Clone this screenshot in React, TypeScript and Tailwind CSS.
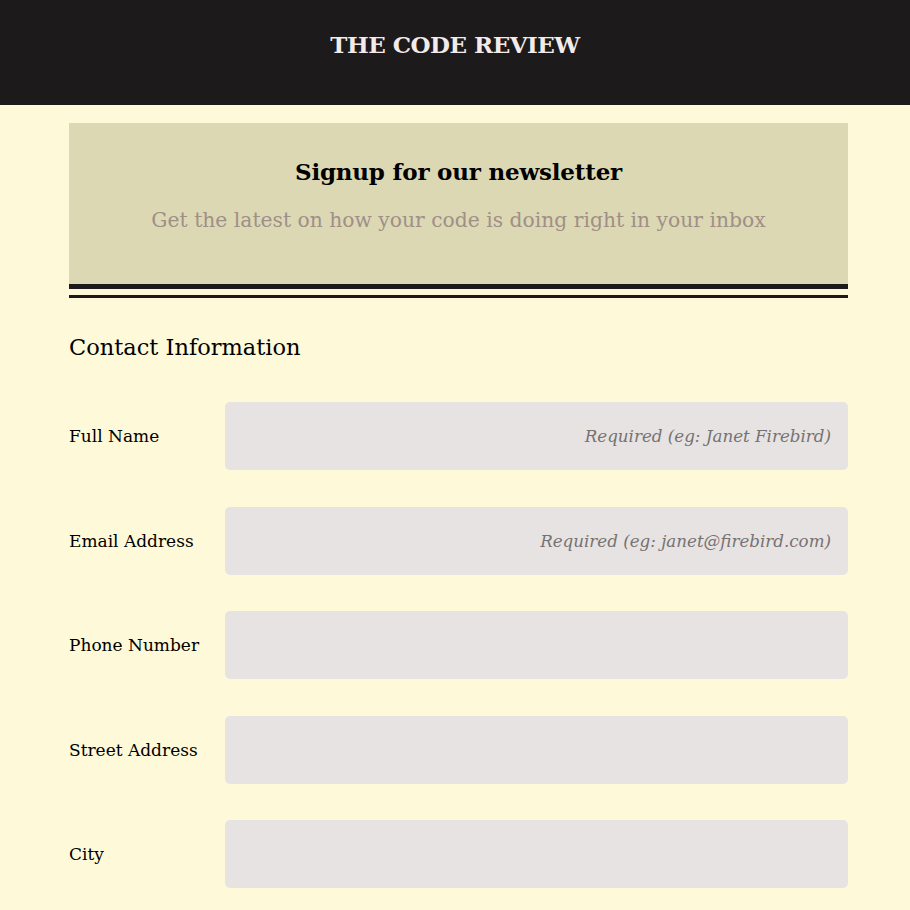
import React from "react"

const fields = [
  { label: "Full Name", placeholder: "Required (eg: Janet Firebird)" },
  { label: "Email Address", placeholder: "Required (eg: janet@firebird.com)" },
  { label: "Phone Number", placeholder: "" },
  { label: "Street Address", placeholder: "" },
  { label: "City", placeholder: "" },
]

const App = () => {
  return (
    <div className="min-h-screen bg-[#fef9d9] font-['DejaVu_Serif',serif] text-[#111]">
      <header className="h-[105px] bg-[#1c1a1b] flex justify-center pt-[28px]">
        <h1 className="text-[23px] leading-[34px] font-bold text-[#f3eaea] tracking-[-0.5px]">
          THE CODE REVIEW
        </h1>
      </header>

      <main className="ml-[69px] w-[779px] pt-[18px] pb-10">
        <section className="bg-[#dcd8b4] border-b-[5px] border-[#1c1a1b] pt-[33px] pb-[50px] text-center">
          <h2 className="text-[23px] font-bold text-black leading-[32px] tracking-[-0.2px]">
            Signup for our newsletter
          </h2>
          <p className="mt-[18px] text-[20.3px] text-[#a08f88] leading-[28px]">
            Get the latest on how your code is doing right in your inbox
          </p>
        </section>
        <div className="mt-[6px] h-[3px] bg-[#1c1a1b]" />

        <h3 className="mt-[33px] text-[22.5px] leading-[32px] text-black">
          Contact Information
        </h3>

        <form className="mt-[39px] flex flex-col gap-[36.5px]">
          {fields.map((f) => (
            <div key={f.label} className="flex items-center">
              <label className="w-[156px] shrink-0 pt-[2px] text-[17px] text-black">
                {f.label}
              </label>
              <input
                type="text"
                placeholder={f.placeholder}
                className="flex-1 h-[68px] rounded-[5px] bg-[#e7e3e2] pl-4 pr-[17px] text-right text-[16.7px] italic outline-none placeholder:text-[#767272]"
              />
            </div>
          ))}
        </form>
      </main>
    </div>
  )
}

export default App
